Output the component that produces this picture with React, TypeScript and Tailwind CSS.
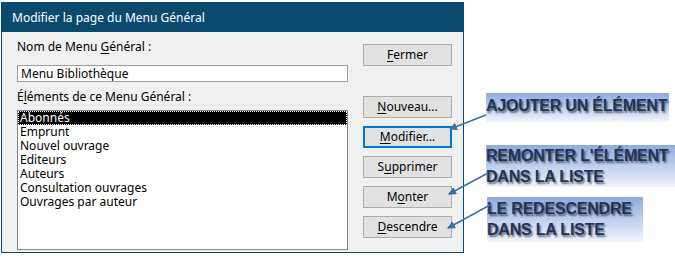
import React from 'react'

const items = [
  'Abonnés',
  'Emprunt',
  'Nouvel ouvrage',
  'Editeurs',
  'Auteurs',
  'Consultation ouvrages',
  'Ouvrages par auteur',
]

function Btn({ pre, key_, post, focused }: { pre: string; key_: string; post: string; focused?: boolean }) {
  return (
    <div
      className={
        'h-[22px] w-[89px] flex items-center justify-center bg-[#e1e1e1] text-[12px] text-black ' +
        (focused ? 'border-2 border-[#0078d7]' : 'border border-[#adadad]')
      }
    >
      <span>
        {pre}
        <span className="underline underline-offset-2">{key_}</span>
        {post}
      </span>
    </div>
  )
}

function Callout({ lines, className }: { lines: string[]; className: string }) {
  return (
    <div
      className={
        'absolute bg-linear-to-b from-[#8eaadc] to-[#f2f5fb] font-["Liberation_Sans",Arial,sans-serif] font-bold text-[16px] leading-[21px] tracking-[-0.2px] text-[#1c355e] [text-shadow:1.5px_1.5px_2px_rgba(0,0,0,0.55)] ' +
        className
      }
    >
      {lines.map((l) => (
        <div key={l}>{l}</div>
      ))}
    </div>
  )
}

export default function App() {
  return (
    <div className="relative w-[675px] h-[260px] bg-white font-['Noto_Sans',sans-serif] overflow-hidden">
      {/* dialog */}
      <div className="ml-[1px] mt-[2px] w-[463px] h-[251px] border border-[#0b4a6f] bg-[#f0f0f0] flex flex-col">
        <div className="h-[29px] bg-[#0b4a6f] text-white text-[12px] pl-[10px] flex items-center">
          Modifier la page du Menu Général
        </div>
        <div className="flex pl-[15px]">
          <div className="w-[331px] flex flex-col text-[12px] text-black">
            <div className="mt-[7px] leading-[16px]">
              Nom de Menu <span className="underline underline-offset-2">G</span>énéral :
            </div>
            <div className="mt-[10px] h-[17px] border border-[#a0a0a0] bg-white leading-[15px] pl-[3px]">
              Menu Bibliothèque
            </div>
            <div className="mt-[7px] leading-[16px]">
              É<span className="underline underline-offset-2">l</span>éments de ce Menu Général :
            </div>
            <div className="mt-[5px] h-[140px] border border-[#828790] bg-white">
              {items.map((it, i) => (
                <div
                  key={it}
                  className={
                    'h-[14px] leading-[14px] pl-[2px] ' +
                    (i === 0 ? 'bg-black text-white outline-1 outline-dotted outline-white -outline-offset-1' : '')
                  }
                >
                  {it}
                </div>
              ))}
            </div>
          </div>
          <div className="ml-[15px] mt-[12px] flex flex-col gap-[8px]">
            <div className="mb-[22px]">
              <Btn pre="" key_="F" post="ermer" />
            </div>
            <Btn pre="" key_="N" post="ouveau..." />
            <Btn pre="" key_="M" post="odifier..." focused />
            <Btn pre="S" key_="u" post="pprimer" />
            <Btn pre="M" key_="o" post="nter" />
            <Btn pre="" key_="D" post="escendre" />
          </div>
        </div>
      </div>

      {/* callouts */}
      <Callout lines={['AJOUTER UN ÉLÉMENT']} className="left-[486px] top-[93px] w-[183px] h-[29px] pt-[2px]" />
      <Callout lines={["REMONTER L'ÉLÉMENT", 'DANS LA LISTE']} className="left-[486px] top-[145px] w-[189px] h-[42px]" />
      <Callout lines={['LE REDESCENDRE', 'DANS LA LISTE']} className="left-[487px] top-[197px] w-[156px] h-[45px] pt-[1px]" />

      {/* arrows */}
      <svg className="absolute inset-0 pointer-events-none" width="675" height="260">
        <defs>
          <marker id="ah" markerWidth="8" markerHeight="8" refX="7" refY="4" orient="auto" markerUnits="userSpaceOnUse">
            <path d="M0,0 L8,4 L0,8 z" fill="#3f6fa3" />
          </marker>
        </defs>
        <line x1="486" y1="115" x2="450" y2="129" stroke="#3f6fa3" strokeWidth="1.5" markerEnd="url(#ah)" />
        <line x1="488" y1="173" x2="449" y2="194" stroke="#3f6fa3" strokeWidth="1.5" markerEnd="url(#ah)" />
        <line x1="490" y1="205" x2="448" y2="228" stroke="#3f6fa3" strokeWidth="1.5" markerEnd="url(#ah)" />
      </svg>
    </div>
  )
}
